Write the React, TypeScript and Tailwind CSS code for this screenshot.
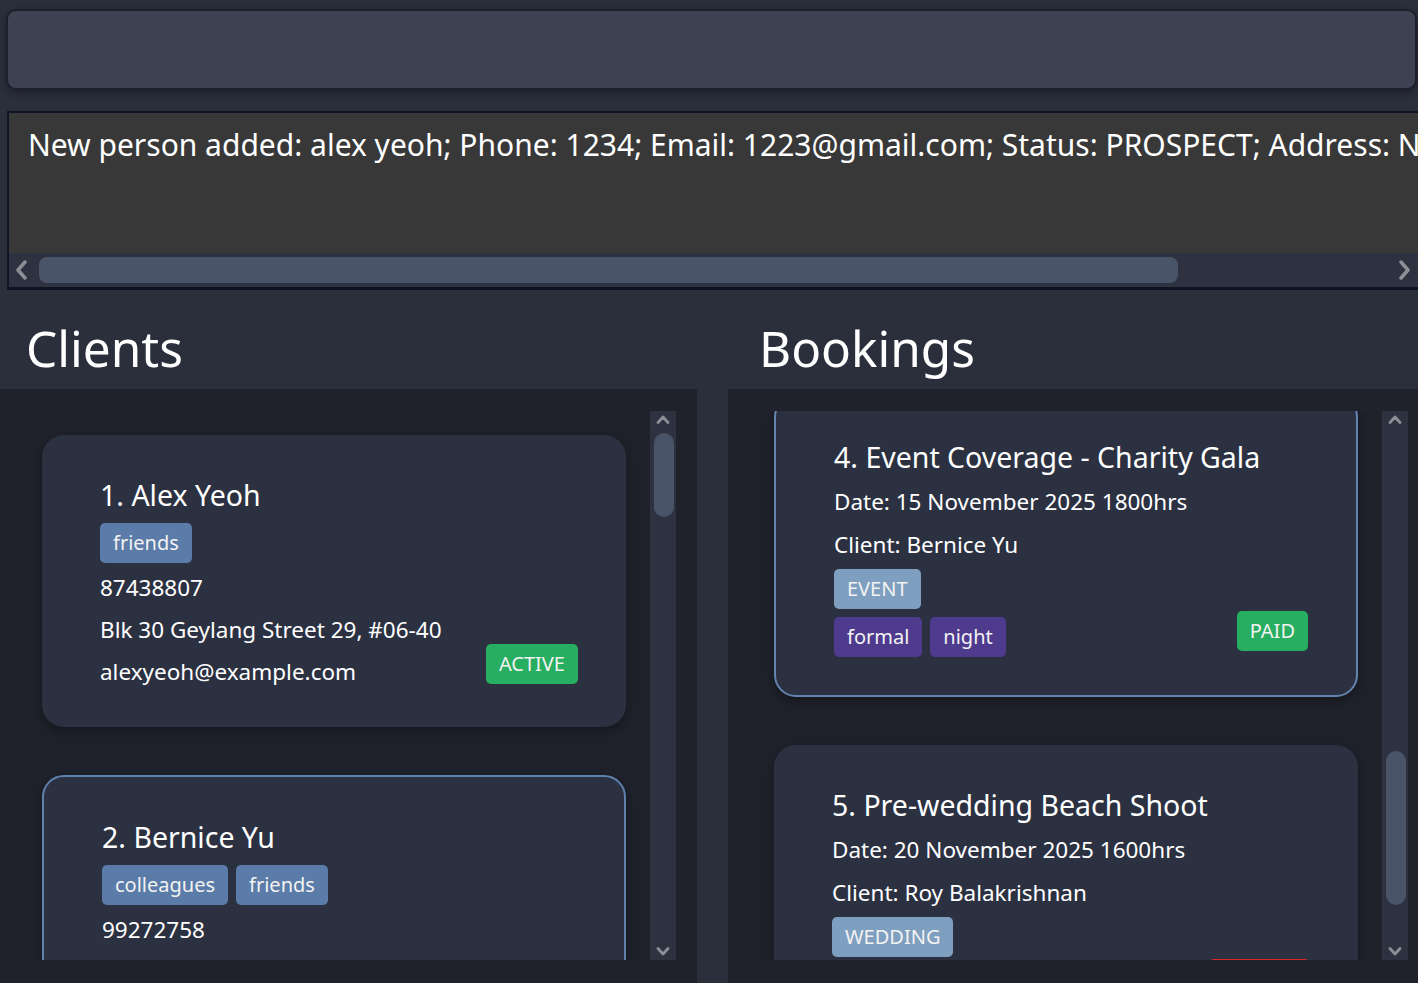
import React from "react";

type Client = {
  id: number;
  name: string;
  tags: string[];
  phone: string;
  address: string;
  email: string;
  status: string;
  selected?: boolean;
};

type Booking = {
  id: number;
  title: string;
  date: string;
  client: string;
  type: string;
  tags: string[];
  payment: string;
  paid: boolean;
  selected?: boolean;
};

const clients: Client[] = [
  {
    id: 1,
    name: "Alex Yeoh",
    tags: ["friends"],
    phone: "87438807",
    address: "Blk 30 Geylang Street 29, #06-40",
    email: "alexyeoh@example.com",
    status: "ACTIVE",
  },
  {
    id: 2,
    name: "Bernice Yu",
    tags: ["colleagues", "friends"],
    phone: "99272758",
    address: "Blk 30 Lorong 3 Serangoon Gardens, #07-18",
    email: "berniceyu@example.com",
    status: "ACTIVE",
    selected: true,
  },
];

const bookings: Booking[] = [
  {
    id: 4,
    title: "Event Coverage - Charity Gala",
    date: "15 November 2025 1800hrs",
    client: "Bernice Yu",
    type: "EVENT",
    tags: ["formal", "night"],
    payment: "PAID",
    paid: true,
    selected: true,
  },
  {
    id: 5,
    title: "Pre-wedding Beach Shoot",
    date: "20 November 2025 1600hrs",
    client: "Roy Balakrishnan",
    type: "WEDDING",
    tags: ["beach", "outdoor"],
    payment: "UNPAID",
    paid: false,
  },
];

function Chevron({ dir }: { dir: "up" | "down" | "left" | "right" }) {
  if (dir === "left" || dir === "right") {
    return (
      <svg width="13" height="22" viewBox="0 0 13 22" className="shrink-0 blur-[0.4px]">
        <polyline
          points={dir === "left" ? "10,3 3,11 10,19" : "3,3 10,11 3,19"}
          fill="none"
          stroke="#8c8f96"
          strokeWidth="3.5"
          strokeLinecap="round"
          strokeLinejoin="round"
        />
      </svg>
    );
  }
  return (
    <svg width="14" height="9" viewBox="0 0 14 9" className="shrink-0 blur-[0.3px]">
      <polyline
        points={dir === "up" ? "2,7.5 7,2 12,7.5" : "2,1.5 7,7 12,1.5"}
        fill="none"
        stroke="#8c8f96"
        strokeWidth="2.8"
        strokeLinecap="round"
        strokeLinejoin="round"
      />
    </svg>
  );
}

function VScrollbar({ thumb }: { thumb: string }) {
  return (
    <div className="flex h-full w-[26px] shrink-0 flex-col bg-[#2e3240]">
      <div className="flex justify-center pt-[4px]">
        <Chevron dir="up" />
      </div>
      <div className={`ml-[4px] w-[20px] rounded-full bg-[#4a5468] ${thumb}`} />
      <div className="mt-auto flex justify-center pb-[4px]">
        <Chevron dir="down" />
      </div>
    </div>
  );
}

function Tag({ label, color }: { label: string; color: string }) {
  return (
    <span className={`flex h-[40px] items-center rounded-[5px] px-[13px] text-[20px] text-[#f2f2f2] ${color}`}>
      {label}
    </span>
  );
}

function ClientCard({ c }: { c: Client }) {
  return (
    <div
      className={`flex w-[584px] shrink-0 rounded-[22px] bg-[#2c3142] pb-[40px] pl-[58px] pr-[48px] pt-[41px] shadow-[0_4px_12px_rgba(0,0,0,0.35)] ${
        c.selected ? "border-2 border-[#5e80ad]" : ""
      }`}
    >
      <div className="min-w-0 flex-1 whitespace-nowrap">
        <div className="text-[28.5px] leading-[38px]">
          {c.id}. {c.name}
        </div>
        <div className="mt-[9px] flex gap-[8px]">
          {c.tags.map((t) => (
            <Tag key={t} label={t} color="bg-[#5b7ca8]" />
          ))}
        </div>
        <div className="mt-[10px] text-[22.5px] leading-[30px]">{c.phone}</div>
        <div className="mt-[12px] text-[22.5px] leading-[30px]">{c.address}</div>
        <div className="mt-[12px] text-[22.5px] leading-[30px]">{c.email}</div>
      </div>
      <div className="mb-[3px] self-end">
        <Tag label={c.status} color="bg-[#27ae60]" />
      </div>
    </div>
  );
}

function BookingCard({ b, className = "" }: { b: Booking; className?: string }) {
  return (
    <div
      className={`flex w-[584px] shrink-0 rounded-[22px] bg-[#2c3142] pb-[38px] pl-[58px] pr-[48px] pt-[41px] shadow-[0_4px_12px_rgba(0,0,0,0.35)] ${
        b.selected ? "border-2 border-[#6384b0]" : ""
      } ${className}`}
    >
      <div className="min-w-0 flex-1 whitespace-nowrap">
        <div className="text-[28.5px] leading-[38px]">
          {b.id}. {b.title}
        </div>
        <div className="mt-[11px] text-[22.5px] leading-[30px]">Date: {b.date}</div>
        <div className="mt-[13px] text-[22.5px] leading-[30px]">Client: {b.client}</div>
        <div className="mt-[9px] flex">
          <Tag label={b.type} color="bg-[#7f9fc0]" />
        </div>
        <div className="mt-[8px] flex gap-[8px]">
          {b.tags.map((t) => (
            <Tag key={t} label={t} color="bg-[#4f3b8e]" />
          ))}
        </div>
      </div>
      <div className="mb-[6px] self-end">
        <Tag label={b.payment} color={b.paid ? "bg-[#27ae60]" : "bg-[#dc2626]"} />
      </div>
    </div>
  );
}

export default function App() {
  return (
    <div className="flex h-[983px] w-[1418px] flex-col overflow-hidden bg-[#2b2f3c] font-['Noto_Sans',sans-serif] text-white">
      {/* command box */}
      <div className="pl-[6px] pr-[1px] pt-[9px]">
        <div className="h-[81px] rounded-[10px] border-2 border-[#1c202b] bg-[#3d4253] shadow-[0_3px_8px_rgba(0,0,0,0.35)]" />
      </div>

      {/* result display */}
      <div className="ml-[7px] mt-[21px] flex h-[179px] w-[1416px] shrink-0 flex-col border-b-[3px] border-l-2 border-t-2 border-[#0d1426]">
        <div className="flex-1 overflow-hidden whitespace-nowrap bg-[#383838] pl-[19px] pt-[12px] text-[30px] leading-[40px]">
          New person added: alex yeoh; Phone: 1234; Email: 1223@gmail.com; Status: PROSPECT; Address: NUS
        </div>
        <div className="flex h-[34px] items-center bg-[#2d3140] pl-[6px] pr-[12px]">
          <Chevron dir="left" />
          <div className="ml-[11px] h-[26px] w-[1139px] rounded-[8px] bg-[#4a5468]" />
          <div className="flex-1" />
          <Chevron dir="right" />
        </div>
      </div>

      {/* headings */}
      <div className="flex h-[99px] shrink-0 pt-[25px] text-[49.5px] leading-[67px]">
        <div className="w-[697px] pl-[26px]">Clients</div>
        <div className="pl-[62px]">Bookings</div>
      </div>

      {/* panels */}
      <div className="flex flex-1">
        <div className="w-[697px] shrink-0 bg-[#1f222b] pl-[20px] pt-[22px]">
          <div className="flex h-[549px]">
            <div className="flex w-[630px] flex-col gap-[48px] overflow-hidden pl-[22px] pt-[24px]">
              {clients.map((c) => (
                <ClientCard key={c.id} c={c} />
              ))}
            </div>
            <VScrollbar thumb="mt-[9px] h-[84px]" />
          </div>
        </div>
        <div className="w-[31px] shrink-0" />
        <div className="flex-1 bg-[#1f222b] pl-[22px] pt-[22px]">
          <div className="flex h-[549px]">
            <div className="flex w-[632px] flex-col gap-[48px] overflow-hidden pl-[24px]">
              {bookings.map((b, i) => (
                <BookingCard key={b.id} b={b} className={i === 0 ? "-mt-[16px]" : ""} />
              ))}
            </div>
            <VScrollbar thumb="mt-[327px] h-[154px]" />
          </div>
        </div>
      </div>
    </div>
  );
}
